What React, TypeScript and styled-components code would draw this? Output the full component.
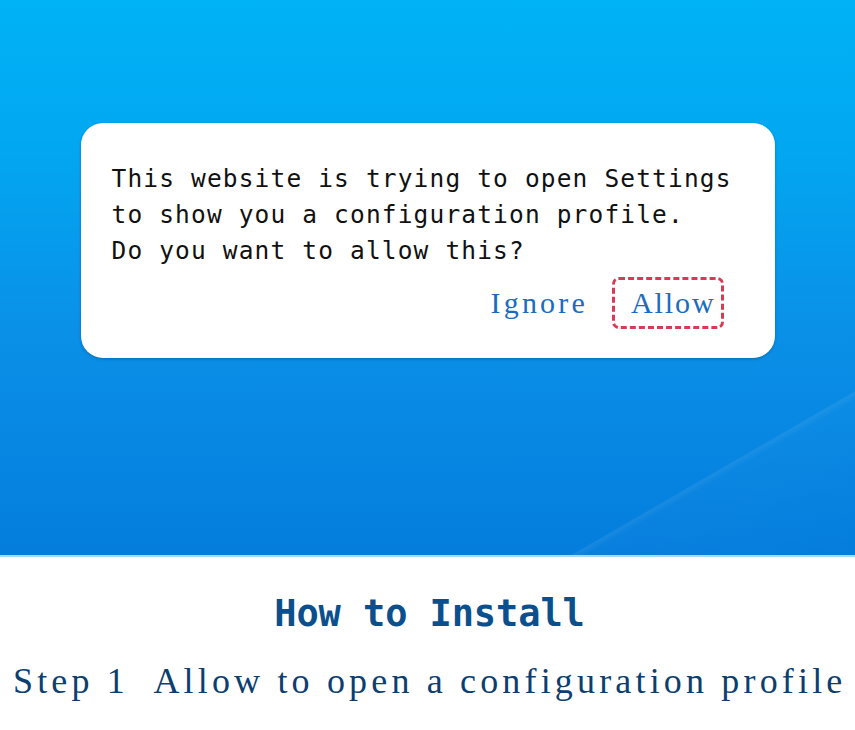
import React from "react";
import styled, { createGlobalStyle } from "styled-components";

const Global = createGlobalStyle`
  html, body { margin: 0; padding: 0; background: #ffffff; }
  body { width: 855px; height: 730px; overflow: hidden; }
`;

const Page = styled.div`
  width: 855px;
  height: 730px;
  display: flex;
  flex-direction: column;
  background: #ffffff;
`;

const Hero = styled.section`
  height: 557px;
  flex: none;
  box-sizing: border-box;
  padding-top: 123px;
  display: flex;
  justify-content: center;
  align-items: flex-start;
  background:
    linear-gradient(150deg, rgba(255,255,255,0) 0%, rgba(255,255,255,0) 84.3%, rgba(255,255,255,0.08) 84.5%, rgba(255,255,255,0.02) 85.2%, rgba(255,255,255,0) 100%),
    linear-gradient(180deg, #00b2f6 0%, #02a8f2 25%, #0a90e7 60%, #047ddd 100%);
  border-bottom: 2px solid #a9dbf6;
`;

const Dialog = styled.div`
  width: 694px;
  height: 235px;
  box-sizing: border-box;
  background: #ffffff;
  border-radius: 22px;
  box-shadow: 0 1px 3px rgba(0, 40, 90, 0.35);
  padding: 38px 45px 0 31px;
  display: flex;
  flex-direction: column;
`;

const Message = styled.p`
  margin: 0;
  font-family: "DejaVu Sans Mono", monospace;
  font-size: 24.5px;
  line-height: 36px;
  letter-spacing: 1.15px;
  color: #111111;
  white-space: pre;
`;

const Actions = styled.div`
  margin-top: 8px;
  display: flex;
  justify-content: flex-end;
  align-items: center;
  gap: 24px;
  padding-right: 6px;
`;

const ActionButton = styled.span<{ $outlined?: boolean }>`
  font-family: "Liberation Serif", serif;
  font-size: 30px;
  letter-spacing: ${(p) => (p.$outlined ? "1.9px" : "3.2px")};
  color: #1a6cc2;
  box-sizing: border-box;
  height: 52px;
  display: inline-flex;
  align-items: center;
  padding: ${(p) => (p.$outlined ? "0 5px 0 16px" : "0")};
  border: ${(p) => (p.$outlined ? "3px dashed #d73a54" : "none")};
  border-radius: 7px;
`;

const Info = styled.section`
  display: flex;
  flex-direction: column;
  align-items: center;
  padding-top: 35px;
`;

const Title = styled.h1`
  margin: 0;
  padding-left: 4px;
  font-family: "DejaVu Sans Mono", monospace;
  font-weight: bold;
  font-size: 37px;
  letter-spacing: -0.1px;
  line-height: 44px;
  color: #0b4f8c;
`;

const Step = styled.p`
  margin: 25px 0 0 0;
  align-self: flex-start;
  padding-left: 13px;
  font-family: "Liberation Serif", serif;
  font-size: 36px;
  letter-spacing: 4.17px;
  line-height: 40px;
  color: #0c3e6f;
  white-space: pre;
`;

export default function App() {
  return (
    <Page>
      <Global />
      <Hero>
        <Dialog>
          <Message>
            {"This website is trying to open Settings\nto show you a configuration profile.\nDo you want to allow this?"}
          </Message>
          <Actions>
            <ActionButton>Ignore</ActionButton>
            <ActionButton $outlined>Allow</ActionButton>
          </Actions>
        </Dialog>
      </Hero>
      <Info>
        <Title>How to Install</Title>
        <Step>{"Step 1  Allow to open a configuration profile"}</Step>
      </Info>
    </Page>
  );
}
